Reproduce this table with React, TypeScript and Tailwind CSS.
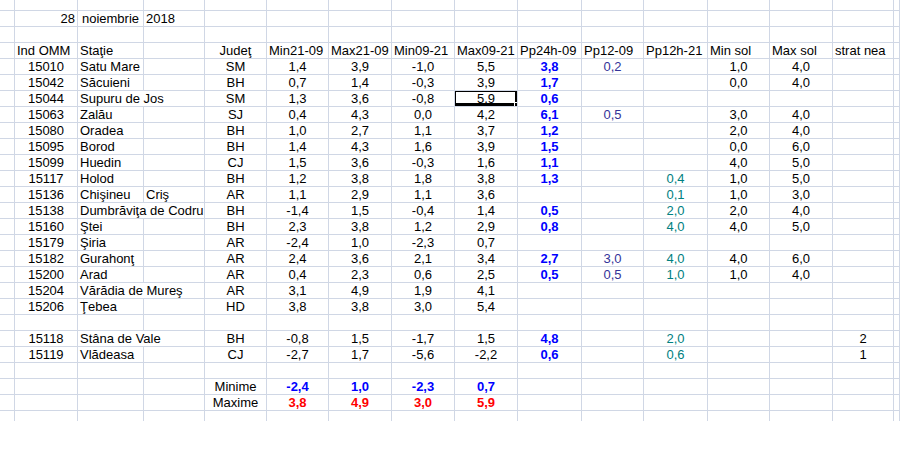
import clsx from 'clsx'

type Align = 'l' | 'c' | 'r'
type Tone = 'k' | 'blue' | 'red' | 'navy' | 'teal'

interface Cell {
  t?: string
  a?: Align
  tone?: Tone
  span?: boolean
  sel?: boolean
}

const alignCls: Record<Align, string> = {
  l: 'text-left pl-[2px]',
  c: 'text-center',
  r: 'text-right pr-[2px]',
}

const toneCls: Record<Tone, string> = {
  k: 'text-black',
  blue: 'font-bold text-[#0000ff]',
  red: 'font-bold text-[#ff0000]',
  navy: 'text-[#333399]',
  teal: 'text-[#008080]',
}

const COLS = 16

function blank(): Cell[] {
  return Array.from({ length: COLS }, () => ({}))
}

function c(t: string, tone: Tone = 'k'): Cell {
  return t ? { t, a: 'c', tone } : {}
}

interface Station {
  ind: string
  name: string
  name2?: string
  long?: boolean
  jud: string
  temps: [string, string, string, string]
  pp24?: string
  pp12?: string
  pp12h?: string
  minSol?: string
  maxSol?: string
  nea?: string
  sel?: boolean
}

function stationRow(s: Station): Cell[] {
  const row: Cell[] = [{}, c(s.ind)]
  if (s.long) {
    row.push({ t: s.name, a: 'l', span: true })
  } else {
    row.push({ t: s.name, a: 'l' })
    row.push(s.name2 ? { t: s.name2, a: 'l' } : {})
  }
  row.push(c(s.jud))
  s.temps.forEach((v, i) => row.push({ ...c(v), sel: s.sel && i === 3 }))
  row.push(c(s.pp24 ?? '', 'blue'))
  row.push(c(s.pp12 ?? '', 'navy'))
  row.push(c(s.pp12h ?? '', 'teal'))
  row.push(c(s.minSol ?? ''))
  row.push(c(s.maxSol ?? ''))
  row.push(c(s.nea ?? ''))
  row.push({})
  return row
}

const stations: Station[] = [
  { ind: '15010', name: 'Satu Mare', jud: 'SM', temps: ['1,4', '3,9', '-1,0', '5,5'], pp24: '3,8', pp12: '0,2', minSol: '1,0', maxSol: '4,0' },
  { ind: '15042', name: 'Săcuieni', jud: 'BH', temps: ['0,7', '1,4', '-0,3', '3,9'], pp24: '1,7', minSol: '0,0', maxSol: '4,0' },
  { ind: '15044', name: 'Supuru de Jos', long: true, jud: 'SM', temps: ['1,3', '3,6', '-0,8', '5,9'], pp24: '0,6', sel: true },
  { ind: '15063', name: 'Zalău', jud: 'SJ', temps: ['0,4', '4,3', '0,0', '4,2'], pp24: '6,1', pp12: '0,5', minSol: '3,0', maxSol: '4,0' },
  { ind: '15080', name: 'Oradea', jud: 'BH', temps: ['1,0', '2,7', '1,1', '3,7'], pp24: '1,2', minSol: '2,0', maxSol: '4,0' },
  { ind: '15095', name: 'Borod', jud: 'BH', temps: ['1,4', '4,3', '1,6', '3,9'], pp24: '1,5', minSol: '0,0', maxSol: '6,0' },
  { ind: '15099', name: 'Huedin', jud: 'CJ', temps: ['1,5', '3,6', '-0,3', '1,6'], pp24: '1,1', minSol: '4,0', maxSol: '5,0' },
  { ind: '15117', name: 'Holod', jud: 'BH', temps: ['1,2', '3,8', '1,8', '3,8'], pp24: '1,3', pp12h: '0,4', minSol: '1,0', maxSol: '5,0' },
  { ind: '15136', name: 'Chişineu', name2: 'Criş', jud: 'AR', temps: ['1,1', '2,9', '1,1', '3,6'], pp12h: '0,1', minSol: '1,0', maxSol: '3,0' },
  { ind: '15138', name: 'Dumbrăviţa de Codru', long: true, jud: 'BH', temps: ['-1,4', '1,5', '-0,4', '1,4'], pp24: '0,5', pp12h: '2,0', minSol: '2,0', maxSol: '4,0' },
  { ind: '15160', name: 'Ştei', jud: 'BH', temps: ['2,3', '3,8', '1,2', '2,9'], pp24: '0,8', pp12h: '4,0', minSol: '4,0', maxSol: '5,0' },
  { ind: '15179', name: 'Şiria', jud: 'AR', temps: ['-2,4', '1,0', '-2,3', '0,7'] },
  { ind: '15182', name: 'Gurahonţ', jud: 'AR', temps: ['2,4', '3,6', '2,1', '3,4'], pp24: '2,7', pp12: '3,0', pp12h: '4,0', minSol: '4,0', maxSol: '6,0' },
  { ind: '15200', name: 'Arad', jud: 'AR', temps: ['0,4', '2,3', '0,6', '2,5'], pp24: '0,5', pp12: '0,5', pp12h: '1,0', minSol: '1,0', maxSol: '4,0' },
  { ind: '15204', name: 'Vărădia de Mureş', long: true, jud: 'AR', temps: ['3,1', '4,9', '1,9', '4,1'] },
  { ind: '15206', name: 'Ţebea', jud: 'HD', temps: ['3,8', '3,8', '3,0', '5,4'] },
]

const mountain: Station[] = [
  { ind: '15118', name: 'Stâna de Vale', long: true, jud: 'BH', temps: ['-0,8', '1,5', '-1,7', '1,5'], pp24: '4,8', pp12h: '2,0', nea: '2' },
  { ind: '15119', name: 'Vlădeasa', jud: 'CJ', temps: ['-2,7', '1,7', '-5,6', '-2,2'], pp24: '0,6', pp12h: '0,6', nea: '1' },
]

const headers = ['Ind OMM', 'Staţie', '', 'Judeţ', 'Min21-09', 'Max21-09', 'Min09-21', 'Max09-21', 'Pp24h-09', 'Pp12-09', 'Pp12h-21', 'Min sol', 'Max sol', 'strat nea']

function headerRow(): Cell[] {
  return [
    {},
    ...headers.map((t): Cell => (t === 'Judeţ' ? { t, a: 'c' } : { t, a: 'l' })),
    {},
  ]
}

function dateRow(): Cell[] {
  const r = blank()
  r[1] = { t: '28', a: 'r' }
  r[2] = { t: 'noiembrie', a: 'c' }
  r[3] = { t: '2018', a: 'l' }
  return r
}

function summaryRow(label: string, vals: string[], tone: Tone): Cell[] {
  const r = blank()
  r[4] = { t: label, a: 'c' }
  vals.forEach((v, i) => (r[5 + i] = c(v, tone)))
  return r
}

const rows: Cell[][] = [
  blank(),
  dateRow(),
  blank(),
  headerRow(),
  ...stations.map(stationRow),
  blank(),
  ...mountain.map(stationRow),
  blank(),
  summaryRow('Minime', ['-2,4', '1,0', '-2,3', '0,7'], 'blue'),
  summaryRow('Maxime', ['3,8', '4,9', '3,0', '5,9'], 'red'),
  blank(),
]

export default function App() {
  return (
    <div className="h-[460px] w-[900px] overflow-hidden bg-white font-['Liberation_Sans',Arial,sans-serif] text-[13px] text-black">
      <div className="grid h-[421px] grid-cols-[15px_63px_66px_61px_62px_62px_63px_63px_63px_64px_62px_64px_62px_63px_61px_1fr] grid-rows-[11px] auto-rows-[16px] overflow-hidden">
        {rows.flatMap((row, i) =>
          row.map((cell, j) => (
            <div
              key={`${i}-${j}`}
              className={clsx(
                'whitespace-nowrap border-r border-b border-[#d0d7e5] leading-[15px]',
                cell.span ? 'col-span-2' : 'overflow-hidden',
                cell.a && alignCls[cell.a],
                cell.tone && toneCls[cell.tone],
                cell.sel && 'relative',
              )}
            >
              {cell.t}
              {cell.sel && (
                <>
                  <div className="absolute -top-[2px] -right-[1px] bottom-0 -left-[2px] z-10 border-[3px] border-black" />
                  <div className="absolute -right-[3px] -bottom-[2px] z-20 h-[6px] w-[6px] border border-white bg-black" />
                </>
              )}
            </div>
          )),
        )}
      </div>
    </div>
  )
}
